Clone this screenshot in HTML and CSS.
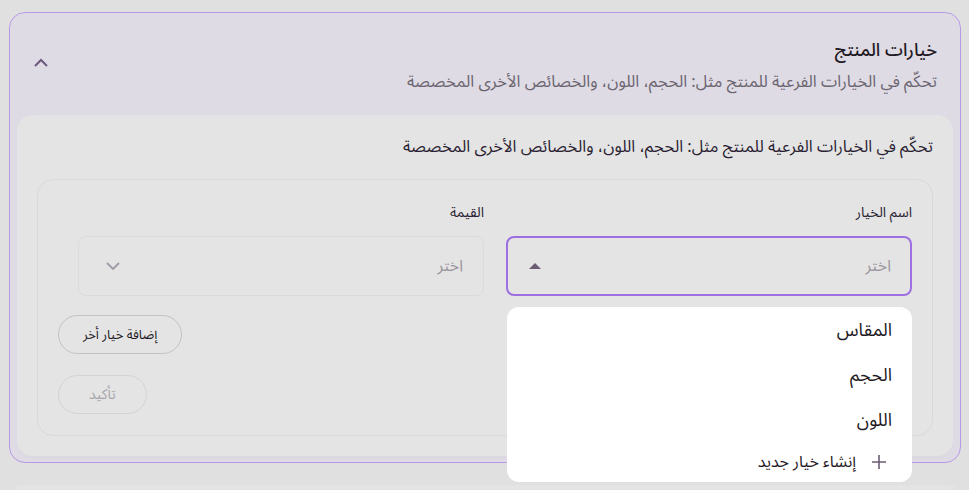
FILE: index.html
```html
<!DOCTYPE html>
<html lang="ar" dir="rtl">

<head>
    <meta charset="UTF-8">
    <meta name="viewport" content="width=device-width, initial-scale=1.0">
    <title>خيارات المنتج</title>
    <link rel="stylesheet" href="styles.css">
</head>

<body class="page">
    <section class="card open">
        <header class="card-head">
            <div class="head-text">
                <h2 class="card-title">خيارات المنتج</h2>
                <p class="card-sub">تحكّم في الخيارات الفرعية للمنتج مثل: الحجم، اللون، والخصائص الأخرى المخصصة</p>
            </div>
            <button class="toggle" type="button">
                <svg width="16" height="10" viewBox="0 0 16 10">
                    <path d="M2 8 L8 2 L14 8" fill="none" stroke="#6b5a7e" stroke-width="2" />
                </svg>
            </button>
        </header>

        <div class="card-body">
            <p class="body-note">تحكّم في الخيارات الفرعية للمنتج مثل: الحجم، اللون، والخصائص الأخرى المخصصة</p>

            <div class="option-box">
                <div class="fields">
                    <div class="field">
                        <label class="field-label">اسم الخيار</label>
                        <div class="select focused">
                            <span class="placeholder">اختر</span>
                            <svg width="14" height="8" viewBox="0 0 14 8">
                                <path d="M1 7 L7 1 L13 7 Z" fill="#6b5e74" />
                            </svg>
                        </div>
                        <!-- قائمة الخيارات -->
                        <ul class="menu">
                            <li class="menu-item">المقاس</li>
                            <li class="menu-item">الحجم</li>
                            <li class="menu-item">اللون</li>
                            <li class="menu-item create">
                                <svg width="16" height="16" viewBox="0 0 16 16">
                                    <path d="M8 1 V15 M1 8 H15" stroke="#6b5e74" stroke-width="1.6" />
                                </svg>
                                <span>إنشاء خيار جديد</span>
                            </li>
                        </ul>
                    </div>
                    <div class="field">
                        <label class="field-label">القيمة</label>
                        <div class="select">
                            <span class="placeholder">اختر</span>
                            <svg width="14" height="8" viewBox="0 0 14 8">
                                <path d="M1 1 L7 7 L13 1" fill="none" stroke="#a09aa6" stroke-width="1.8" />
                            </svg>
                        </div>
                    </div>
                </div>

                <div class="actions">
                    <button class="pill" type="button">إضافة خيار أخر</button>
                    <button class="pill" type="button" disabled>تأكيد</button>
                </div>
            </div>
        </div>
    </section>

    <section class="card next"></section>
</body>

</html>
```

FILE: styles.css
```css
* {
    box-sizing: border-box;
}

.page {
    margin: 0;
    padding: 12px 8px 0 9px;
    background: #e0e0e0;
    font-family: "Noto Sans Arabic", "Noto Sans", "DejaVu Sans", sans-serif;
    color: #1f1a24;
    height: 490px;
    overflow: hidden;
}

.card {
    border-radius: 16px;
}

.card.open {
    background: #dfdbe5;
    border: 1px solid #b79ae6;
    padding: 0 7px 6px 7px;
}

.card-head {
    display: flex;
    align-items: flex-start;
    justify-content: space-between;
    padding: 23px 16px 0 16px;
    height: 102px;
}

.card-title {
    margin: 0;
    font-size: 18px;
    font-weight: 500;
    line-height: 28px;
}

.card-sub {
    margin: 6px 0 0;
    font-size: 16.4px;
    line-height: 24px;
    color: #6b6570;
}

.toggle {
    border: none;
    background: none;
    padding: 0;
    margin-top: 22px;
    display: flex;
}

.card-body {
    background: #e4e4e4;
    border-radius: 16px;
    padding: 20px;
    box-shadow: 0 3px 0 #dcd9e1, 0 5px 0 #dedbe4;
}

.body-note {
    margin: 0 0 20px;
    font-size: 16.4px;
    line-height: 24px;
    color: #2b1f33;
}

.option-box {
    border: 1px solid #d9d9d9;
    border-radius: 16px;
    padding: 22px 20px 21px 20px;
}

.fields {
    display: grid;
    grid-template-columns: 1fr 1fr;
    gap: 22px;
    margin-left: 20px;
}

.field {
    position: relative;
    display: flex;
    flex-direction: column;
    gap: 12px;
}

.field-label {
    font-size: 14px;
    line-height: 22px;
    color: #2b1f33;
}

.select {
    display: flex;
    align-items: center;
    justify-content: space-between;
    height: 60px;
    padding: 0 20px 0 27px;
    border: 1px solid #dbdbdb;
    border-radius: 8px;
}

.select.focused {
    border: 2px solid #9d6fe0;
    padding: 0 19px 0 20px;
}

.placeholder {
    font-size: 16px;
    color: #9a959e;
}

.menu {
    position: absolute;
    top: 105px;
    right: 0;
    left: 1px;
    margin: 0;
    padding: 0;
    list-style: none;
    background: #fff;
    border-radius: 12px;
    z-index: 2;
}

.menu-item {
    height: 45px;
    padding: 0 20px;
    display: flex;
    align-items: center;
    font-size: 18px;
    color: #1f1a24;
}

.menu-item.create {
    height: 40px;
    gap: 15px;
    padding: 0 25px 0 20px;
    font-size: 16px;
}

.actions {
    margin-top: 19px;
    display: flex;
    flex-direction: column;
    align-items: flex-end;
    gap: 21px;
}

.pill {
    height: 39px;
    padding: 0 24px;
    border: 1px solid #c4c0c8;
    border-radius: 20px;
    background: transparent;
    font-family: inherit;
    font-size: 13px;
    color: #1f1a24;
}

.pill:disabled {
    padding: 0 30px;
    border-color: #d4d2d6;
    color: #a8a4ab;
    font-size: 14px;
}

.card.next {
    margin: 22px 6px 0 6px;
    height: 4px;
    border-radius: 16px 16px 0 0;
    background: #e4e4e4;
}
```
